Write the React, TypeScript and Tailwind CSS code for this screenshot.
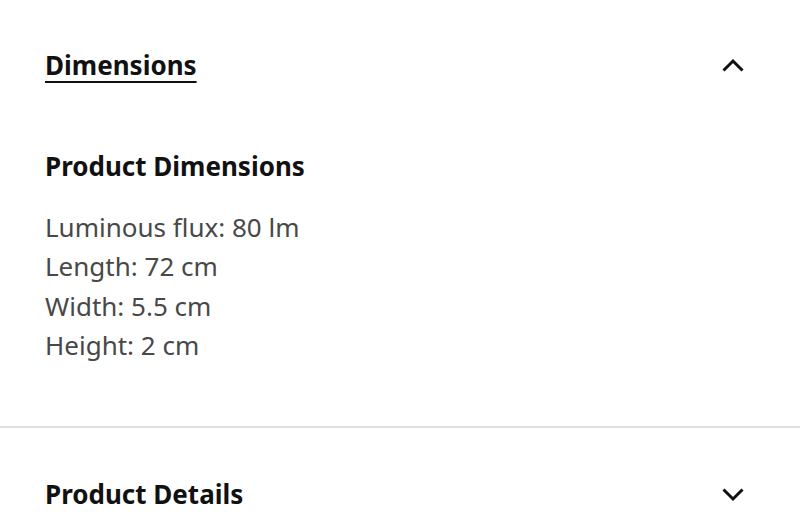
import React from 'react';

const font = { fontFamily: '"Noto Sans", "Open Sans", Arial, sans-serif' };

const Chevron: React.FC<{ up?: boolean }> = ({ up }) => (
  <svg width="24" height="24" viewBox="0 0 24 24" fill="none" className="text-[#111111]">
    {up ? (
      <path d="M2.5 17.5 12 8l9.5 9.5" stroke="currentColor" strokeWidth="3" />
    ) : (
      <path d="M2.5 7.5 12 17l9.5-9.5" stroke="currentColor" strokeWidth="3" />
    )}
  </svg>
);

const specs = ['Luminous flux: 80 lm', 'Length: 72 cm', 'Width: 5.5 cm', 'Height: 2 cm'];

export default function App() {
  return (
    <div className="w-[800px] h-[526px] overflow-hidden bg-white" style={font}>
      {/* Dimensions section (open) */}
      <section className="px-[45px]">
        <button className="w-full flex items-center justify-between pt-[47px] text-left">
          <span className="text-[26px] leading-[36px] font-bold text-[#111111] underline underline-offset-[6px] decoration-2">
            Dimensions
          </span>
          <span className="mr-[10px]">
            <Chevron up />
          </span>
        </button>
        <h3 className="mt-[65px] text-[26px] font-bold text-[#111111] leading-[36px]">Product Dimensions</h3>
        <ul className="mt-[24px] pb-[61px] text-[26px] text-[#484848] leading-[39.3px]">
          {specs.map((s) => (
            <li key={s}>{s}</li>
          ))}
        </ul>
      </section>

      <div className="h-[2px] bg-[#dfdfdf]" />

      {/* Product Details section (closed) */}
      <section className="px-[45px]">
        <button className="w-full flex items-center justify-between pt-[48px] text-left">
          <span className="text-[26px] leading-[36px] font-bold text-[#111111]">Product Details</span>
          <span className="mr-[10px]">
            <Chevron />
          </span>
        </button>
      </section>
    </div>
  );
}
